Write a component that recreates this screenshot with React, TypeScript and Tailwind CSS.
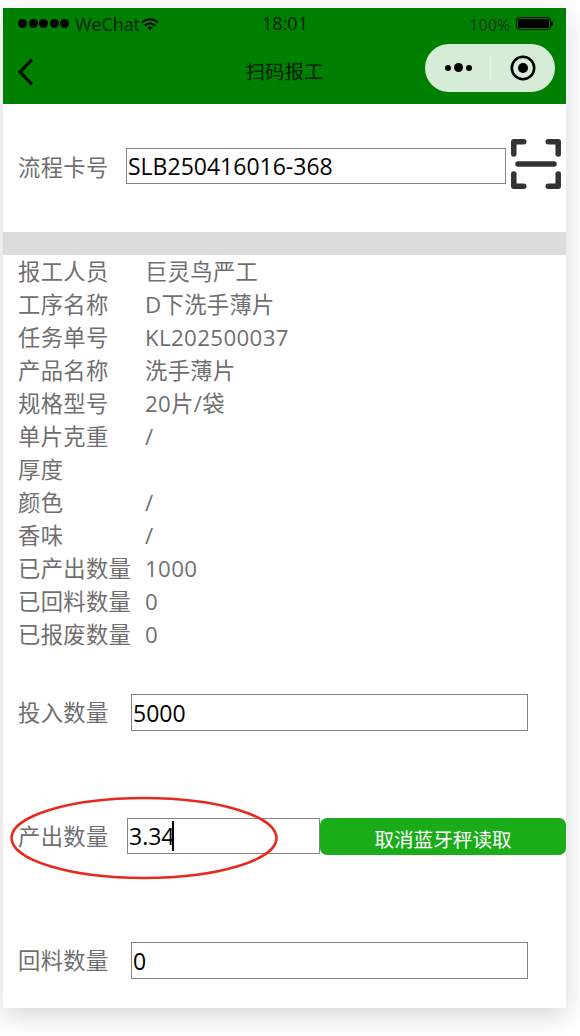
import React from 'react';

const font = '[font-family:"Open_Sans","Noto_Sans_CJK_SC",sans-serif]';
const labelText = 'text-[22.3px] tracking-[0.35px] text-[#6f6f6f]';

const infoRows: [string, string][] = [
  ['报工人员', '巨灵鸟严工'],
  ['工序名称', 'D下洗手薄片'],
  ['任务单号', 'KL202500037'],
  ['产品名称', '洗手薄片'],
  ['规格型号', '20片/袋'],
  ['单片克重', '/'],
  ['厚度', ''],
  ['颜色', '/'],
  ['香味', '/'],
  ['已产出数量', '1000'],
  ['已回料数量', '0'],
  ['已报废数量', '0'],
];

const StatusBar = () => (
  <div className="flex h-[31px] items-center pl-[15px] pr-[12px] text-[#062206]">
    <div className="flex w-[190px] items-center">
      <div className="flex gap-[1.5px]">
        {[0, 1, 2, 3, 4].map((i) => (
          <span key={i} className="h-[9px] w-[9px] rounded-full bg-black" />
        ))}
      </div>
      <span className="ml-[6px] text-[18px] leading-none tracking-[-0.1px]">WeChat</span>
      <svg width="18" height="14" viewBox="0 0 18 14" className="ml-[1px] mt-[1px]">
        <path d="M1 5.5a11.5 11.5 0 0 1 16 0" fill="none" stroke="#000" strokeWidth="2" />
        <path d="M4 8.5a7.3 7.3 0 0 1 10 0" fill="none" stroke="#000" strokeWidth="2" />
        <path d="M6.4 10.6a3.8 3.8 0 0 1 5.2 0L9 13.4z" fill="#000" />
      </svg>
    </div>
    <span className="-mt-[2px] w-[154px] text-center text-[18px] leading-none">18:01</span>
    <div className="ml-auto mr-[1px] flex items-center">
      <span className="mt-[3px] text-[16px] leading-none text-[#123a12]">100%</span>
      <div className="ml-[6px] flex h-[13px] w-[35px] items-center rounded-[3px] border border-black p-[1px]">
        <div className="h-full w-full rounded-[1px] bg-black" />
      </div>
      <div className="h-[5px] w-[2px] rounded-r-sm bg-black" />
    </div>
  </div>
);

const NavBar = () => (
  <div className="grid h-[65px] grid-cols-[1fr_auto_1fr] items-center px-[11px]">
    <svg width="18" height="28" viewBox="0 0 18 28" className="ml-[3px] mt-[1px]">
      <path d="M15 1.5 3 14l12 12.500" fill="none" stroke="#000" strokeWidth="3" />
    </svg>
    <span className="whitespace-nowrap text-[19.5px] leading-none text-[#041c04]">扫码报工</span>
    <div className="-mt-[8px] flex h-[48px] w-[130px] items-center justify-self-end rounded-full bg-[#d7ecd7]">
      <div className="flex w-[65px] items-center justify-center gap-[3px] pl-[1px]">
        <span className="h-[6px] w-[6px] rounded-full bg-black" />
        <span className="h-[9px] w-[9px] rounded-full bg-black" />
        <span className="h-[6px] w-[6px] rounded-full bg-black" />
      </div>
      <div className="h-[26px] w-[1px] bg-[#eaf5ea]" />
      <div className="flex flex-1 items-center justify-center">
        <svg width="26" height="26" viewBox="0 0 26 26">
          <circle cx="13" cy="13" r="11.2" fill="none" stroke="#000" strokeWidth="2.6" />
          <circle cx="13" cy="13" r="5" fill="#000" />
        </svg>
      </div>
    </div>
  </div>
);

const ScanIcon = () => (
  <svg width="50" height="50" viewBox="0 0 50 50" className="ml-[5px] -mt-[4px]">
    <g fill="none" stroke="#333" strokeWidth="5.5" strokeLinecap="round" strokeLinejoin="round">
      <path d="M2.800 15V2.800h10" />
      <path d="M37.200 2.800h10V15" />
      <path d="M2.800 35v12.200h10" />
      <path d="M37.200 47.200h10V35" />
      <path d="M7 25h36" />
    </g>
  </svg>
);

const Field = ({ value, className }: { value: string; className: string }) => (
  <input
    readOnly
    value={value}
    className={`border border-[#858585] bg-white px-[1px] text-[23px] text-black outline-none ${className}`}
  />
);

export default function App() {
  return (
    <div className={`relative h-[1036px] w-[580px] overflow-hidden bg-white pl-[3px] pt-[8px] ${font}`}>
      <div className="relative h-[1000px] w-[563px] bg-white shadow-[0_8px_24px_rgba(0,0,0,0.16)]">
        <header className="h-[96px] bg-[#008000]">
          <StatusBar />
          <NavBar />
        </header>

        <section className="flex h-[128px] items-center pb-[4px] pl-[15px]">
          <span className={`mt-[4px] w-[108px] ${labelText}`}>流程卡号</span>
          <Field value="SLB250416016-368" className="h-[36px] w-[380px]" />
          <ScanIcon />
        </section>

        <div className="h-[23px] bg-[#dcdcdc]" />

        <section className="pl-[15px]">
          {infoRows.map(([label, value]) => (
            <div key={label} className={`flex h-[33px] items-center ${labelText}`}>
              <span className="w-[128px] shrink-0 whitespace-nowrap">{label}</span>
              <span className="-ml-[1px]">{value}</span>
            </div>
          ))}
        </section>

        <section className="mt-[43px] flex items-center pl-[15px]">
          <span className={`w-[113px] ${labelText}`}>投入数量</span>
          <Field value="5000" className="h-[37px] w-[397px]" />
        </section>

        <section className="relative mt-[87px] flex items-start pl-[15px]">
          <span className={`mt-[2px] w-[109px] ${labelText}`}>产出数量</span>
          <div className="relative">
            <Field value="3.34" className="h-[36px] w-[193px]" />
            <span className="absolute left-[45px] top-[3px] h-[30px] w-[2px] bg-black" />
          </div>
          <button className="h-[37px] w-[246px] rounded-[7px] bg-[#1aad19] pt-[7px] text-[19.6px] leading-[30px] text-white">
            取消蓝牙秤读取
          </button>
          <svg width="268" height="84" viewBox="0 0 268 84" className="pointer-events-none absolute left-[7px] top-[-22px]">
            <ellipse cx="134" cy="42" rx="132.500" ry="40" fill="none" stroke="#e8291d" strokeWidth="2.500" />
          </svg>
        </section>

        <section className="mt-[87px] flex items-center pl-[15px]">
          <span className={`w-[113px] ${labelText}`}>回料数量</span>
          <Field value="0" className="h-[37px] w-[397px]" />
        </section>
      </div>
    </div>
  );
}
